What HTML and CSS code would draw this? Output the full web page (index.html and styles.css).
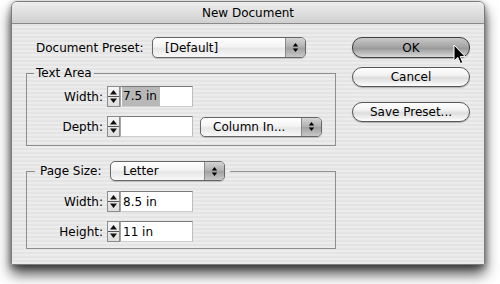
FILE: index.html
```html
<!DOCTYPE html>
<html>
<head>
<meta charset="utf-8">
<link rel="stylesheet" href="styles.css">
</head>
<body>
<div class="window">
  <div class="titlebar">New Document</div>
  <div class="content">
    <div class="main">
      <div class="preset-row">
        <span class="preset-label">Document Preset:</span>
        <div class="popup popup-preset">
          <span class="ptext">[Default]</span>
          <span class="parrows"><svg width="7" height="11" viewBox="0 0 7 11"><path d="M3.5 1 L6.2 4.6 L0.8 4.6 Z M0.8 6.4 L6.2 6.4 L3.5 10 Z" fill="#000"/></svg></span>
        </div>
      </div>

      <fieldset class="group group-text">
        <legend class="legend-text">Text Area</legend>
        <div class="field-row row-first">
          <span class="flabel">Width:</span>
          <span class="stepper"><svg width="11" height="19" viewBox="0 0 11 19"><path d="M5.5 3 L9 7.5 L2 7.5 Z M2 11.5 L9 11.5 L5.5 16 Z" fill="#111"/><rect x="0" y="9" width="11" height="1" fill="#555"/></svg></span>
          <span class="tfield"><span class="sel">7.5 in</span></span>
        </div>
        <div class="field-row row-next">
          <span class="flabel">Depth:</span>
          <span class="stepper"><svg width="11" height="19" viewBox="0 0 11 19"><path d="M5.5 3 L9 7.5 L2 7.5 Z M2 11.5 L9 11.5 L5.5 16 Z" fill="#111"/><rect x="0" y="9" width="11" height="1" fill="#555"/></svg></span>
          <span class="tfield"></span>
          <div class="popup popup-column">
            <span class="ptext">Column In...</span>
            <span class="parrows"><svg width="7" height="11" viewBox="0 0 7 11"><path d="M3.5 1 L6.2 4.6 L0.8 4.6 Z M0.8 6.4 L6.2 6.4 L3.5 10 Z" fill="#000"/></svg></span>
          </div>
        </div>
      </fieldset>

      <fieldset class="group group-page">
        <legend class="legend-page">
          <span class="page-label">Page Size:</span>
          <div class="popup popup-letter">
            <span class="ptext">Letter</span>
            <span class="parrows"><svg width="7" height="11" viewBox="0 0 7 11"><path d="M3.5 1 L6.2 4.6 L0.8 4.6 Z M0.8 6.4 L6.2 6.4 L3.5 10 Z" fill="#000"/></svg></span>
          </div>
        </legend>
        <div class="field-row row-page-first">
          <span class="flabel">Width:</span>
          <span class="stepper"><svg width="11" height="19" viewBox="0 0 11 19"><path d="M5.5 3 L9 7.5 L2 7.5 Z M2 11.5 L9 11.5 L5.5 16 Z" fill="#111"/><rect x="0" y="9" width="11" height="1" fill="#555"/></svg></span>
          <span class="tfield"><span class="val">8.5 in</span></span>
        </div>
        <div class="field-row row-next">
          <span class="flabel">Height:</span>
          <span class="stepper"><svg width="11" height="19" viewBox="0 0 11 19"><path d="M5.5 3 L9 7.5 L2 7.5 Z M2 11.5 L9 11.5 L5.5 16 Z" fill="#111"/><rect x="0" y="9" width="11" height="1" fill="#555"/></svg></span>
          <span class="tfield"><span class="val">11 in</span></span>
        </div>
      </fieldset>
    </div>

    <div class="buttons">
      <div class="btn btn-default">OK</div>
      <div class="btn btn-cancel">Cancel</div>
      <div class="btn btn-save">Save Preset...</div>
    </div>
  </div>

  <svg class="cursor" width="14" height="21" viewBox="0 0 14 21"><path d="M1 1 L1 17 L4.8 13.4 L7.4 19.5 L9.8 18.5 L7.3 12.6 L12.2 12.6 Z" fill="#000" stroke="#fff" stroke-width="1" stroke-linejoin="round"/></svg>
</div>
</body>
</html>
```

FILE: styles.css
```css
* { box-sizing: border-box; }
html, body { margin: 0; padding: 0; }
body {
  background: #fff;
  width: 500px;
  height: 284px;
  overflow: hidden;
  font-family: "DejaVu Sans", "Liberation Sans", sans-serif;
  font-size: 12px;
  color: #000;
}

.window {
  position: relative;
  margin: 1px 0 0 11px;
  width: 474px;
  height: 264px;
  border: 1px solid #7c7c7c;
  border-radius: 6px 6px 1px 1px;
  background: repeating-linear-gradient(to bottom, #ececec 0 2px, #e4e4e4 2px 4px);
  box-shadow: 0 9px 14px rgba(0,0,0,.7), 0 2px 6px rgba(0,0,0,.4);
}

.titlebar {
  height: 22px;
  border-bottom: 1px solid #8a8a8a;
  border-radius: 5px 5px 0 0;
  background: linear-gradient(#eeeeee, #d0d0d0);
  display: flex;
  align-items: center;
  justify-content: center;
  font-size: 12px;
}

.content {
  display: flex;
  padding-left: 14px;
}

.main {
  width: 310px;
  display: flex;
  flex-direction: column;
}

.preset-row {
  display: flex;
  align-items: center;
  height: 21px;
  margin-top: 13px;
  padding-left: 10px;
}
.preset-label { width: 116px; }

/* popups */
.popup {
  display: flex;
  align-items: center;
  height: 21px;
  border: 1px solid #666;
  border-radius: 5px;
  background: linear-gradient(#ffffff, #f4f4f4 45%, #e6e6e6 55%, #f8f8f8);
  box-shadow: 0 1px 1px rgba(0,0,0,.18);
  overflow: hidden;
}
.popup .ptext { flex: 1; padding-left: 12px; white-space: nowrap; }
.popup .parrows {
  width: 20px;
  height: 100%;
  border-left: 1px solid #8a8a8a;
  background: linear-gradient(#d4d4d4, #b0b0b0 48%, #a0a0a0 52%, #c8c8c8);
  display: flex;
  align-items: center;
  justify-content: center;
}
.popup-preset { width: 154px; }
.popup-column { width: 122px; height: 20px; margin-left: 7px; }
.popup-letter { width: 115px; height: 20px; }

/* group boxes */
.group {
  margin: 8px 0 0 0;
  padding: 0 0 8px 0;
  border: 1px solid #8e8e8e;
  min-inline-size: 0;
  width: 310px;
}
.legend-text {
  margin-left: 7px;
  padding: 0 2px;
  line-height: 15px;
}
.group-page {
  margin-top: 15px;
  padding-bottom: 6px;
}
.legend-page {
  margin-left: 8px;
  padding: 0 5px;
  display: flex;
  align-items: center;
}
.page-label { width: 70px; }

.field-row {
  display: flex;
  align-items: center;
  height: 21px;
}
.row-first { margin-top: 5px; }
.row-next { margin-top: 9px; }
.row-page-first { margin-top: 10px; }

.flabel {
  width: 77px;
  padding-right: 1px;
  margin-right: 3px;
  text-align: right;
}

.stepper {
  width: 13px;
  height: 21px;
  border: 1px solid #8c8c8c;
  background: linear-gradient(#f6f6f6, #dedede);
  display: flex;
}

.tfield {
  width: 73px;
  height: 21px;
  background: #fff;
  border-top: 1px solid #7a7a7a;
  border-left: 1px solid #a4a4a4;
  border-right: 1px solid #bcbcbc;
  border-bottom: 1px solid #cfcfcf;
  display: flex;
  align-items: center;
  padding-left: 1px;
}
.tfield .sel {
  background: #b8b8b8;
  height: 19px;
  line-height: 19px;
  padding: 0 3px 0 1px;
}
.tfield .val { padding-left: 1px; }

/* buttons */
.buttons {
  margin-left: 16px;
  padding-top: 13px;
  width: 118px;
  display: flex;
  flex-direction: column;
}
.btn {
  height: 20px;
  border: 1px solid #555;
  border-radius: 10px;
  display: flex;
  align-items: center;
  justify-content: center;
  background: linear-gradient(#fefefe, #f2f2f2 40%, #dddddd 55%, #eeeeee 80%, #ffffff);
  box-shadow: 0 1px 1px rgba(0,0,0,.25);
}
.btn-default {
  height: 21px;
  border-color: #3f3f3f;
  background: linear-gradient(#c8c8c8, #a6a6a6 45%, #9a9a9a 55%, #c4c4c4 85%, #dadada);
}
.btn-cancel { margin-top: 9px; }
.btn-save { margin-top: 15px; }

.cursor {
  position: absolute;
  left: 441px;
  top: 42px;
}
```
